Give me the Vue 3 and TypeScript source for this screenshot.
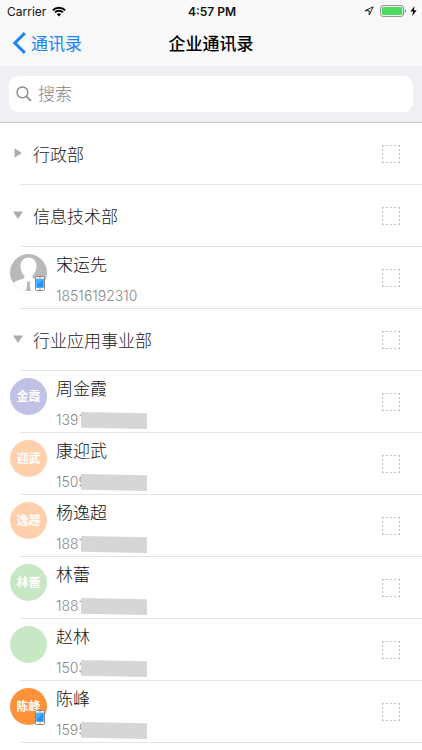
<script setup lang="ts">
import { ref } from 'vue'

interface Person {
  kind: 'person'
  id: string
  name: string
  phone: string
  masked: boolean
  initials: string
  tone: string
  online: boolean
}

interface Group {
  kind: 'group'
  id: string
  name: string
  open: boolean
}

const person = (
  id: string, name: string, phone: string, initials: string, tone: string, online = false, masked = true,
): Person => ({ kind: 'person', id, name, phone, masked, initials, tone, online })

const rows = ref<(Group | Person)[]>([
  { kind: 'group', id: 'g1', name: '行政部', open: false },
  { kind: 'group', id: 'g2', name: '信息技术部', open: true },
  person('p1', '宋运先', '18516192310', '', 'photo', true, false),
  { kind: 'group', id: 'g3', name: '行业应用事业部', open: true },
  person('p2', '周金霞', '1391', '金霞', 'violet'),
  person('p3', '康迎武', '1509', '迎武', 'peach'),
  person('p4', '杨逸超', '1881', '逸超', 'peach'),
  person('p5', '林蕾', '1881', '林蕾', 'green'),
  person('p6', '赵林', '1503', '', 'green'),
  person('p7', '陈峰', '1595', '陈峰', 'orange', true),
])

const selected = ref<string[]>([])
const query = ref('')
</script>

<template>
  <div class="page">
    <header class="top">
      <div class="status">
        <div class="status-left">
          <span>Carrier</span>
          <svg class="wifi" viewBox="0 0 14 11" aria-hidden="true">
            <path d="M0.9 4.2a8.8 8.8 0 0 1 12.2 0M3 6.4a5.8 5.8 0 0 1 8 0" fill="none" stroke="#000" stroke-width="1.9" />
            <path d="M4.8 8.2a3.2 3.2 0 0 1 4.4 0L7 10.5z" fill="#000" />
          </svg>
        </div>
        <span class="time">4:57 PM</span>
        <div class="status-right">
          <svg class="locate" viewBox="0 0 10 10" aria-hidden="true">
            <path d="M9.2 0.8L0.9 4.7h4.3v4.4z" fill="none" stroke="#222" stroke-width="1" stroke-linejoin="round" />
          </svg>
          <svg class="battery" viewBox="0 0 27 12" aria-hidden="true">
            <rect x="0.6" y="0.6" width="23" height="10.8" rx="2.4" fill="#fff" stroke="#8d8d8d" stroke-width="1" />
            <rect x="2" y="2" width="20.2" height="8" rx="1" fill="#4cd964" />
            <path d="M24.8 4v4c1.6-.6 1.6-3.4 0-4z" fill="#8d8d8d" />
          </svg>
          <svg class="bolt" viewBox="0 0 7 10" aria-hidden="true">
            <path d="M4.6 0L0.4 5.6h2.7L2.2 10l4.4-5.8H3.8z" fill="#000" />
          </svg>
        </div>
      </div>
      <nav class="nav">
        <a class="back" href="#">
          <svg class="chevron" viewBox="0 0 13 22" aria-hidden="true">
            <path d="M11.8 1.1L1.9 11l9.9 9.900" fill="none" stroke="#1b82f7" stroke-width="2.9" />
          </svg>
          <span>通讯录</span>
        </a>
        <h1 class="title">企业通讯录</h1>
      </nav>
    </header>

    <div class="search-bar">
      <label class="search">
        <svg class="lens" viewBox="0 0 16 16" aria-hidden="true">
          <circle cx="6.4" cy="6.4" r="5.4" fill="none" stroke="#85858a" stroke-width="1.3" />
          <path d="M10.3 10.3l4.6 4.6" stroke="#85858a" stroke-width="1.5" />
        </svg>
        <input v-model="query" type="text" placeholder="搜索" aria-label="搜索" />
      </label>
    </div>

    <ul class="list">
      <li v-for="row in rows" :key="row.id" class="row">
        <button v-if="row.kind === 'group'" class="group" type="button" :aria-expanded="row.open" @click="row.open = !row.open">
          <svg class="arrow" viewBox="0 0 10 10" aria-hidden="true">
            <path v-if="row.open" d="M0 1.5h10L5 9z" fill="#adadad" />
            <path v-else d="M1.5 0.2v9.6L9 5z" fill="#adadad" />
          </svg>
          <span>{{ row.name }}</span>
        </button>
        <div v-else class="person">
          <div class="avatar" :class="row.tone">
            <svg v-if="row.tone === 'photo'" class="portrait" viewBox="0 0 36 36" aria-hidden="true">
              <defs>
                <clipPath id="portrait-clip"><circle cx="18" cy="18" r="18" /></clipPath>
              </defs>
              <g clip-path="url(#portrait-clip)">
                <rect width="36" height="36" fill="#b9b9b9" />
                <path d="M18 3.500c-5 0-7.800 3.600-7.800 8.400 0 4.200 1.800 7.200 3.800 9.200v2.400C9.500 25 4 26.500 2 29v7h32v-7c-2-2.500-7.500-4-12-5.500v-2.400c2-2 3.800-5 3.800-9.200 0-4.800-2.800-8.400-7.800-8.400z" fill="#fff" />
                <path d="M16 27h4l-.9 2.500L20.500 36h-5l1.400-6.500z" fill="#b5b5b5" />
              </g>
            </svg>
            <span v-else>{{ row.initials }}</span>
            <svg v-if="row.online" class="device" viewBox="0 0 10 15" aria-hidden="true">
              <rect x="0.5" y="0.5" width="9" height="14" rx="1.200" fill="#fff" stroke="#85776f" stroke-width="0.9" />
              <rect x="1.300" y="2.800" width="7.400" height="9" fill="#2196f3" />
              <path d="M1.300 2.800h7.400L1.300 9.500z" fill="#4fb0fa" />
              <path d="M3.800 1.700h2.400" stroke="#999" stroke-width="0.6" />
              <circle cx="5" cy="13.100" r="0.700" fill="#777" />
            </svg>
          </div>
          <div class="info">
            <span class="name">{{ row.name }}</span>
            <span class="phone">{{ row.phone }}<i v-if="row.masked" class="mask" /></span>
          </div>
        </div>
        <input v-model="selected" class="check" type="checkbox" :value="row.id" :aria-label="row.name" />
      </li>
    </ul>
  </div>
</template>

<style>
body {
  background: #fff;
}
</style>

<style scoped>
.page {
  font-family: Inter, "Noto Sans CJK SC", sans-serif;
  color: #333;
}

.top {
  background: #f9f9f9;
}

.status {
  display: grid;
  grid-template-columns: 1fr auto 1fr;
  align-items: center;
  height: 22px;
  padding: 0 5px 0 7px;
  font-size: 12px;
  color: #111;
}

.status-left,
.status-right {
  display: flex;
  align-items: center;
  gap: 6px;
}

.status-right {
  justify-content: flex-end;
}

.time {
  font-weight: 600;
}

.wifi {
  width: 14px;
  height: 11px;
}

.locate {
  width: 10px;
  height: 10px;
}

.battery {
  width: 27px;
  height: 12px;
}

.bolt {
  width: 7px;
  height: 10px;
  margin-left: -3px;
}

.nav {
  display: grid;
  grid-template-columns: 1fr auto 1fr;
  align-items: center;
  box-sizing: border-box;
  height: 44px;
  padding: 0 13px 3px;
}

.back {
  display: flex;
  align-items: center;
  gap: 5px;
  font-size: 17px;
  color: #1b82f7;
  text-decoration: none;
}

.chevron {
  width: 13px;
  height: 22px;
}

.title {
  margin: 0;
  font-size: 17px;
  font-weight: 500;
  color: #000;
}

.search-bar {
  padding: 10px 9px;
  background: #efeff4;
  border-bottom: 1px solid #c4c4ca;
}

.search {
  display: flex;
  align-items: center;
  gap: 6px;
  height: 36px;
  padding: 0 7px;
  border-radius: 9px;
  background: #fff;
}

.lens {
  width: 16px;
  height: 16px;
}

.search input {
  flex: 1;
  min-width: 0;
  padding: 0;
  border: 0;
  outline: 0;
  background: none;
  font: inherit;
  font-size: 17px;
}

.search input::placeholder {
  color: #85858a;
  font-weight: 300;
}

.list {
  margin: 0;
  padding: 0;
  list-style: none;
}

.row {
  display: flex;
  align-items: center;
  height: 62px;
  padding-right: 22px;
  background: linear-gradient(#e4e4e4, #e4e4e4) 20px 100% / 100% 1px no-repeat;
}

.group {
  display: flex;
  flex: 1;
  align-items: center;
  gap: 10px;
  padding: 0 0 2px 13px;
  border: 0;
  background: none;
  font: inherit;
  font-size: 17px;
  font-weight: 300;
  color: #222;
  text-align: left;
}

.arrow {
  width: 10px;
  height: 10px;
}

.person {
  display: flex;
  flex: 1;
  gap: 9px;
  height: 62px;
  padding-left: 10px;
  box-sizing: border-box;
}

.avatar {
  position: relative;
  display: flex;
  align-items: center;
  justify-content: center;
  width: 37px;
  height: 37px;
  margin-top: 7px;
  border-radius: 50%;
  font-size: 12px;
  line-height: 16px;
  font-weight: 700;
  color: #fff;
}

.portrait {
  width: 37px;
  height: 37px;
}

.violet {
  background: #bfc1e6;
}

.peach {
  background: #ffd0ab;
}

.green {
  background: #c8e7c5;
}

.orange {
  background: #fd923b;
}

.device {
  position: absolute;
  right: 2px;
  bottom: 0;
  width: 10px;
  height: 15px;
}

.info {
  display: flex;
  flex-direction: column;
  gap: 8px;
  padding-top: 5px;
}

.name {
  font-size: 17px;
  font-weight: 300;
  line-height: 26px;
  color: #111;
}

.phone {
  position: relative;
  font-size: 14px;
  font-weight: 300;
  line-height: 20px;
  color: #888;
}

.mask {
  position: absolute;
  top: 2px;
  left: 25px;
  width: 66px;
  height: 17px;
  background: #d6d6d6;
  clip-path: polygon(0 0, 100% 8%, 100% 100%, 0 92%);
}

.check {
  --dash: #c4c4c4 0 2px, transparent 2px 4px;
  width: 18px;
  height: 18px;
  margin: 0;
  appearance: none;
  background:
    repeating-linear-gradient(90deg, var(--dash)) 0 0 / 100% 1px no-repeat,
    repeating-linear-gradient(90deg, var(--dash)) 0 100% / 100% 1px no-repeat,
    repeating-linear-gradient(180deg, var(--dash)) 0 0 / 1px 100% no-repeat,
    repeating-linear-gradient(180deg, var(--dash)) 100% 0 / 1px 100% no-repeat;
}

.check:checked {
  background-color: #1b82f7;
}
</style>
